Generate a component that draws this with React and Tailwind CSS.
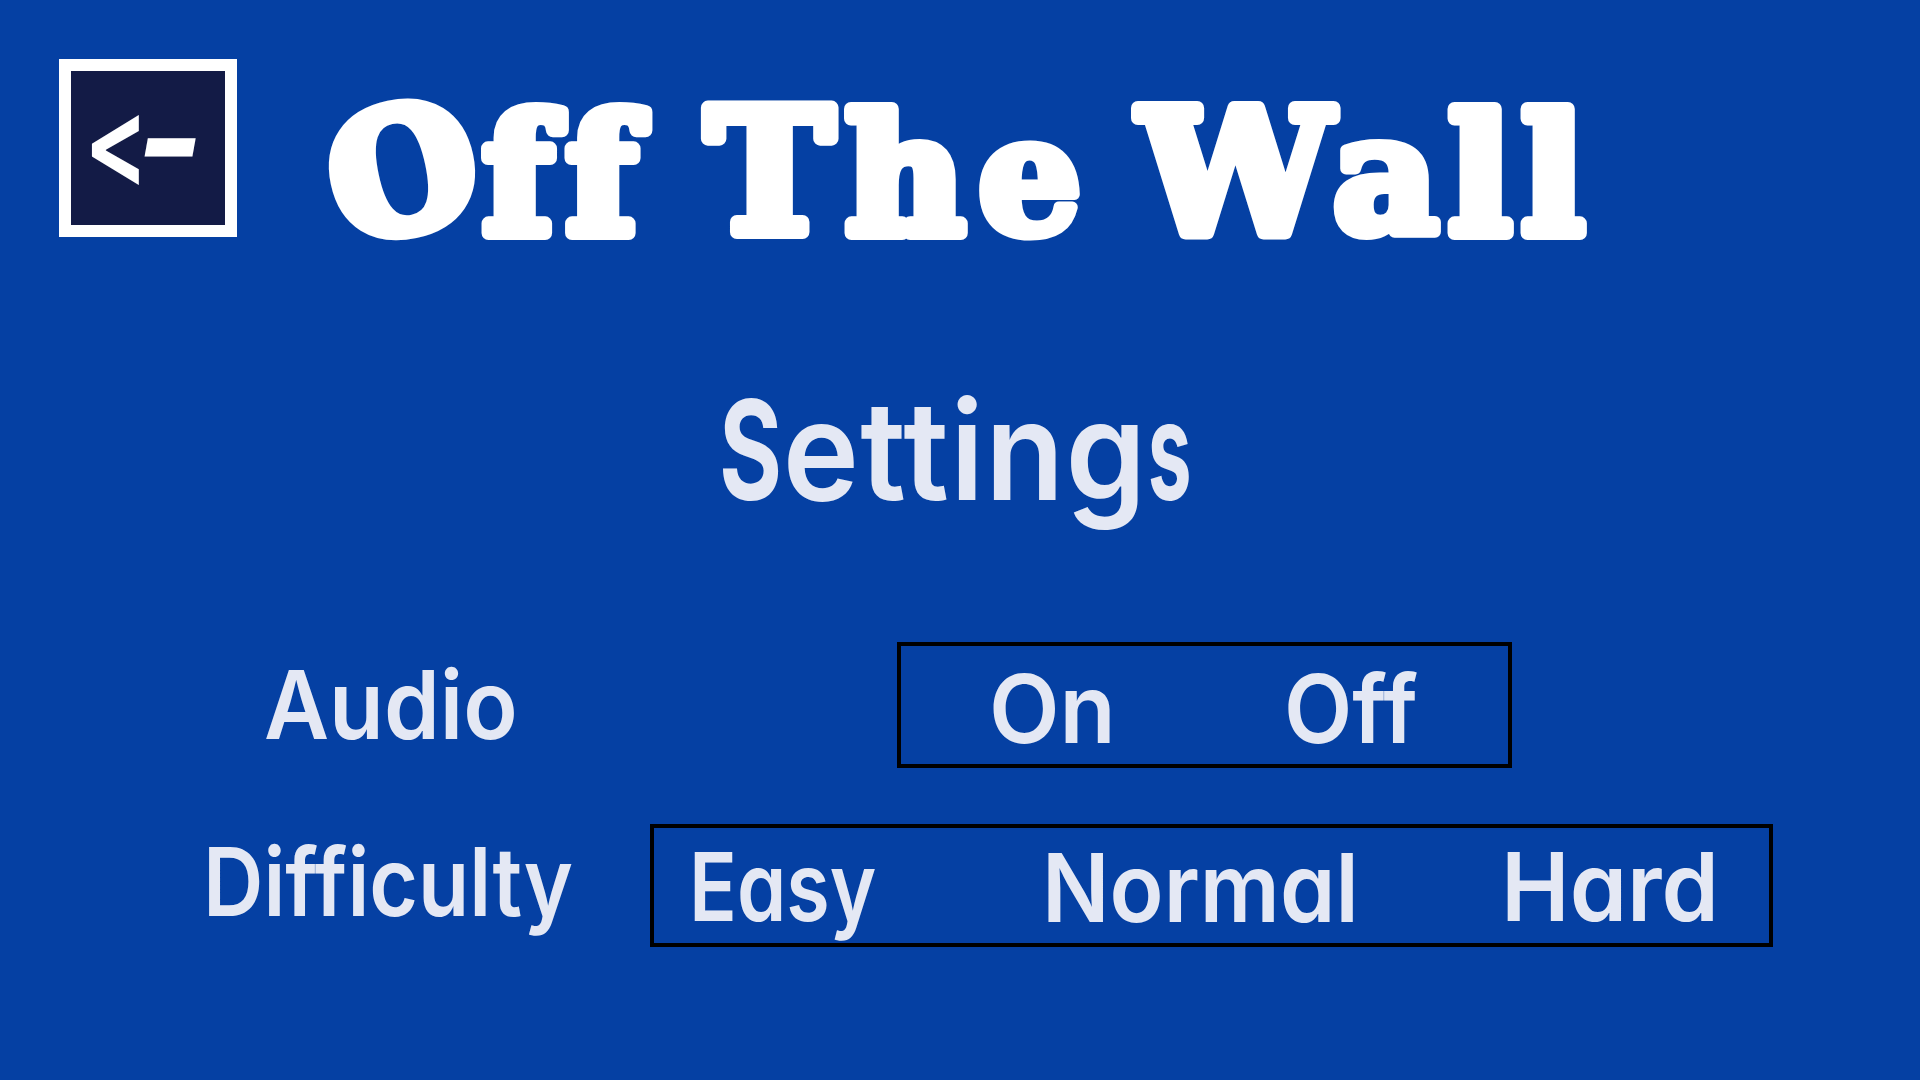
const TEXT = "block whitespace-nowrap origin-left text-[95px] leading-[95px]";

function Option({ children, cell, text }) {
  return (
    <button type="button" className={`block shrink-0 text-left ${cell}`}>
      <span className={`${TEXT} ${text}`}>{children}</span>
    </button>
  );
}

function Wordmark() {
  return (
    <svg
      className="h-[160px] w-[1280px] overflow-visible"
      viewBox="320 90 1280 160"
      fill="#fff"
      stroke="#fff"
      strokeWidth="14"
      strokeLinejoin="round"
      fontFamily='"DejaVu Serif", serif'
      fontWeight="700"
      fontSize="163"
    >
      <text y="232">
        <tspan x="343.5" y="244" rotate="-12" fontSize="167">O</tspan>
        <tspan x="483 566.5" y="233">ff</tspan>
      </text>
      <text y="232">
        <tspan x="706" fontSize="171">T</tspan>
        <tspan x="846" y="233">h</tspan>
        <tspan x="978" strokeWidth="11">e</tspan>
      </text>
      <text y="232">
        <tspan x="1139.5" fontSize="171">W</tspan>
        <tspan x="1333" strokeWidth="12">a</tspan>
        <tspan x="1449 1522" y="233">ll</tspan>
      </text>
    </svg>
  );
}

export default function App() {
  return (
    <main className="h-[1080px] w-[1920px] overflow-hidden bg-[#0540a3] font-['Inter',sans-serif] font-semibold text-[#e4e8f4] [font-feature-settings:'cv11'_1,'calt'_0]">
      <header className="flex h-[250px] items-start pt-[59px] pl-[59px]">
        <button
          type="button"
          className="flex h-[178px] w-[178px] shrink-0 items-start border-12 border-white bg-[#131b46] pl-[13px] text-white"
        >
          <span className="mt-[7px] block w-[54px] origin-left scale-x-[0.76] text-[127px] leading-[127px]">&lt;</span>
          <span className="mt-[8px] block origin-left -skew-x-12 scale-x-[1.26] scale-y-[1.5] text-[116px] leading-[116px]">-</span>
        </button>
        <h1 className="mt-[31px] ml-[83px] shrink-0">
          <Wordmark />
        </h1>
      </header>

      <h2 className="mt-[131px] ml-[719px] flex w-max origin-left scale-x-[0.873] text-[138px] leading-[138px] whitespace-nowrap">
        <span className="-mr-[17px] block origin-left scale-x-[0.8] font-bold">S</span>
        <span className="mr-[29px] block origin-left scale-x-[1.07] tracking-[1.5px]">etting</span>
        <span className="-ml-[2px] block origin-left scale-x-[0.65] font-bold">s</span>
      </h2>

      <section className="mt-[123px] flex h-[126px]">
        <div className="w-[897px] shrink-0 pt-[15px] pl-[264px]">
          <span className={`${TEXT} scale-x-[0.942]`}>Audio</span>
        </div>
        <div className="flex w-[615px] items-start border-4 border-black pt-[15px] pl-[88px]">
          <Option cell="w-[295px]" text="scale-x-[0.967]">On</Option>
          <Option cell="w-[150px]" text="scale-x-[0.935]">Off</Option>
        </div>
      </section>

      <section className="mt-14 flex h-[123px]">
        <div className="w-[650px] shrink-0 pt-[10px] pl-[203px]">
          <span className={`${TEXT} scale-x-[0.881]`}>Difficulty</span>
        </div>
        <div className="flex w-[1123px] items-start border-4 border-black pt-[11px] pl-[35px]">
          <Option cell="w-[353px]" text="scale-x-[0.833]">Easy</Option>
          <Option cell="w-[459px] pt-px" text="scale-x-[0.936]">Normal</Option>
          <Option cell="w-[230px]" text="scale-x-[0.969]">Hard</Option>
        </div>
      </section>
    </main>
  );
}
